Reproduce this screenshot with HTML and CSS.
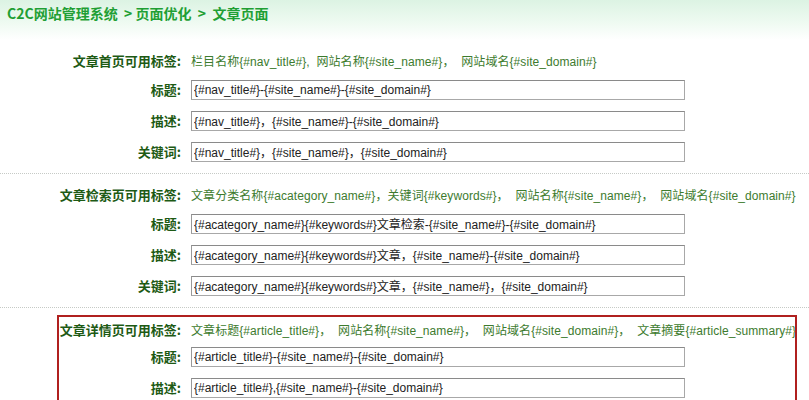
FILE: index.html
```html
<!DOCTYPE html>
<html lang="zh-CN">
<head>
<meta charset="utf-8">
<title>文章页面</title>
<link rel="stylesheet" href="styles.css">
</head>
<body>
<div class="crumb-bar">
  <div class="crumb">C2C网站管理系统 &nbsp;&gt; 页面优化 &nbsp;&gt; &nbsp;文章页面</div>
</div>

<div class="sec">
  <div class="row head">
    <div class="lbl">文章首页可用标签:</div>
    <div class="tags">栏目名称{#nav_title#}, &nbsp;网站名称{#site_name#}， &nbsp;网站域名{#site_domain#}</div>
  </div>
  <div class="row">
    <div class="lbl">标题:</div>
    <div class="val"><input class="fld" type="text" value="{#nav_title#}-{#site_name#}-{#site_domain#}"></div>
  </div>
  <div class="row">
    <div class="lbl">描述:</div>
    <div class="val"><input class="fld" type="text" value="{#nav_title#}，{#site_name#}-{#site_domain#}"></div>
  </div>
  <div class="row">
    <div class="lbl">关键词:</div>
    <div class="val"><input class="fld" type="text" value="{#nav_title#}，{#site_name#}，{#site_domain#}"></div>
  </div>
</div>

<div class="sec">
  <div class="row head">
    <div class="lbl">文章检索页可用标签:</div>
    <div class="tags">文章分类名称{#acategory_name#}，关键词{#keywords#}， &nbsp;网站名称{#site_name#}， &nbsp;网站域名{#site_domain#}</div>
  </div>
  <div class="row">
    <div class="lbl">标题:</div>
    <div class="val"><input class="fld" type="text" value="{#acategory_name#}{#keywords#}文章检索-{#site_name#}-{#site_domain#}"></div>
  </div>
  <div class="row">
    <div class="lbl">描述:</div>
    <div class="val"><input class="fld" type="text" value="{#acategory_name#}{#keywords#}文章，{#site_name#}-{#site_domain#}"></div>
  </div>
  <div class="row">
    <div class="lbl">关键词:</div>
    <div class="val"><input class="fld" type="text" value="{#acategory_name#}{#keywords#}文章，{#site_name#}，{#site_domain#}"></div>
  </div>
</div>

<div class="sec boxed">
  <div class="row head">
    <div class="lbl">文章详情页可用标签:</div>
    <div class="tags">文章标题{#article_title#}， &nbsp;网站名称{#site_name#}， &nbsp;网站域名{#site_domain#}， &nbsp;文章摘要{#article_summary#}</div>
  </div>
  <div class="row">
    <div class="lbl">标题:</div>
    <div class="val"><input class="fld" type="text" value="{#article_title#}-{#site_name#}-{#site_domain#}"></div>
  </div>
  <div class="row">
    <div class="lbl">描述:</div>
    <div class="val"><input class="fld" type="text" value="{#article_title#},{#site_name#}-{#site_domain#}"></div>
  </div>
</div>
</body>
</html>
```

FILE: styles.css
```css
html, body {
  margin: 0;
  padding: 0;
  background: #ffffff;
  font-family: "Liberation Sans", "Noto Sans CJK SC", sans-serif;
  font-size: 12px;
  color: #222;
  overflow: hidden;
}

.crumb-bar {
  height: 40px;
  background: linear-gradient(to bottom, #dcf3e3 0%, #eefaf1 55%, #ffffff 100%);
  box-sizing: border-box;
  padding: 5px 0 0 7px;
}

.crumb {
  font-family: "Noto Sans CJK SC", sans-serif;
  font-size: 14px;
  font-weight: bold;
  line-height: 16px;
  color: #1f9f34;
  white-space: nowrap;
}

.sec {
  padding: 6px 0;
  border-bottom: 1px dotted #c6cac6;
}

.row {
  display: flex;
  align-items: center;
  height: 31px;
}

.row.head {
  height: 28px;
}

.lbl {
  flex: 0 0 181px;
  text-align: right;
  font-family: "Noto Sans CJK SC", sans-serif;
  font-weight: bold;
  font-size: 13px;
  color: #1d5a14;
  white-space: nowrap;
}

.tags, .val {
  margin-left: 10px;
  flex: 1 1 auto;
  min-width: 0;
}

.tags {
  font-family: "Liberation Sans", "Noto Sans CJK SC", sans-serif;
  color: #3d7b2e;
  letter-spacing: 0.07px;
  white-space: nowrap;
  overflow: hidden;
}

.fld {
  display: block;
  width: 494px;
  height: 20px;
  box-sizing: border-box;
  margin: 0;
  padding: 0 2px;
  border: 1px solid #a8a8a8;
  border-top-color: #8a8a8a;
  border-left-color: #999;
  background: #fff;
  font-family: "Liberation Sans", "Noto Sans CJK SC", sans-serif;
  font-size: 12px;
  color: #222;
  outline: none;
}

.sec.boxed {
  margin: 7px 0 0 57px;
  width: 740px;
  box-sizing: border-box;
  padding: 0 0 12px;
  border: 2px solid #b0201f;
}

.sec.boxed .row.head {
  height: 24px;
}

.sec.boxed .lbl {
  flex-basis: 122px;
}
```
